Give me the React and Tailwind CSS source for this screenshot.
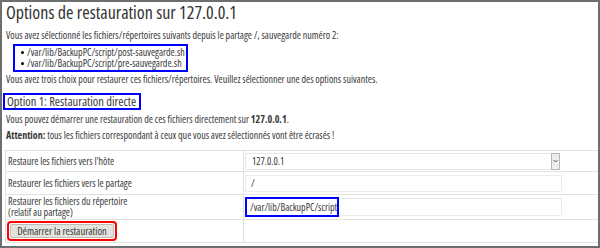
import React from "react";

export default function App() {
  const font = { fontFamily: '"Open Sans", "Noto Sans", sans-serif' };
  return (
    <div className="w-[600px] h-[248px] bg-white border-2 border-[#6e6e6e] overflow-hidden text-[#383838] font-stretch-[76%]" style={font}>
      <h1 className="text-[18px] leading-[16px] pt-[2px] pl-[4px] font-normal text-[#333] whitespace-nowrap">
        Options de restauration sur 127.0.0.1
      </h1>
      <p className="text-[10px] leading-[10px] mt-[10px] pl-[4px] whitespace-nowrap">
        Vous avez sélectionné les fichiers/répertoires suivants depuis le partage /, sauvegarde numéro 2:
      </p>
      <div className="ml-[11px] mt-[4px] w-fit h-[28px] border-2 border-[#0000ff] flex flex-col justify-center pl-[6px] pr-[1px]">
        <div className="flex items-center text-[10px] leading-[11px] whitespace-nowrap">
          <span className="w-[3px] h-[3px] rounded-full bg-black mr-[3px]"></span>
          /var/lib/BackupPC/script/post-sauvegarde.sh
        </div>
        <div className="flex items-center text-[10px] leading-[11px] whitespace-nowrap">
          <span className="w-[3px] h-[3px] rounded-full bg-black mr-[3px]"></span>
          /var/lib/BackupPC/script/pre-sauvegarde.sh
        </div>
      </div>
      <p className="text-[10px] leading-[10px] mt-[2px] pl-[4px] whitespace-nowrap">
        Vous avez trois choix pour restaurer ces fichiers/répertoires. Veuillez sélectionner une des options suivantes.
      </p>
      <div className="mt-[9px] ml-[1px] w-fit h-[17px] border-2 border-[#0000ff] flex items-center pl-[2px] pr-[3px] text-[12.5px] leading-[13px] whitespace-nowrap">
        Option 1: Restauration directe
      </div>
      <p className="text-[10px] leading-[10px] mt-[4px] pl-[4px] whitespace-nowrap">
        Vous pouvez démarrer une restauration de ces fichiers directement sur <b>127.0.0.1</b>.
      </p>
      <p className="text-[10px] leading-[10px] mt-[6px] pl-[4px] whitespace-nowrap">
        <b>Attention:</b> tous les fichiers correspondant à ceux que vous avez sélectionnés vont être écrasés !
      </p>
      <div className="mt-[10px] ml-[3px] border-t border-l border-[#e2e2dc] text-[10px] leading-[10px] grid grid-cols-[238px_1fr]">
        <div className="h-[21px] flex items-center pl-[2px] border-r border-b border-[#e2e2dc] whitespace-nowrap">Restaure les fichiers vers l'hôte</div>
        <div className="h-[21px] flex items-center pl-[1px] border-b border-[#e2e2dc]">
          <div className="w-[315px] h-[17px] border border-[#e6e6e6] flex items-center justify-between pl-[6px]">
            <span>127.0.0.1</span>
            <span className="w-[9px] h-[17px] -mr-[1px] border border-[#b5b5b5] bg-[#ededed] rounded-[1px] flex items-center justify-center">
              <svg width="5" height="4" viewBox="0 0 5 4"><path d="M0.5 1 L2.5 3 L4.5 1" stroke="#555" strokeWidth="1" fill="none" /></svg>
            </span>
          </div>
        </div>
        <div className="h-[23px] flex items-center pl-[2px] border-r border-b border-[#e2e2dc] whitespace-nowrap">Restaurer les fichiers vers le partage</div>
        <div className="h-[23px] flex items-center pl-[1px] border-b border-[#e2e2dc]">
          <div className="w-[317px] h-[17px] border border-[#ececec] flex items-center pl-[5px]">/</div>
        </div>
        <div className="h-[25px] flex flex-col justify-center pl-[2px] border-r border-b border-[#e2e2dc] whitespace-nowrap leading-[11px]">
          <span>Restaurer les fichiers du répertoire</span>
          <span>(relatif au partage)</span>
        </div>
        <div className="h-[25px] flex items-center pl-[1px] border-b border-[#e2e2dc]">
          <div className="w-[317px] h-[18px] border border-[#ececec] flex items-center relative">
            <div className="absolute -left-[1px] -top-[2px] w-[94px] h-[20px] border-2 border-[#0000ff]"></div>
            <span className="pl-[4px]">/var/lib/BackupPC/script</span>
          </div>
        </div>
        <div className="h-[23px] flex items-center pl-[1px] border-r border-[#e2e2dc] border-b">
          <div className="w-[110px] h-[20px] border-2 border-[#ff0000] rounded-[4px] flex items-center justify-center p-[1px]">
            <div className="w-full h-full bg-[#e4e4de] border border-[#bdbdb6] rounded-[2px] flex items-center justify-center text-[10.5px] whitespace-nowrap">
              Démarrer la restauration
            </div>
          </div>
        </div>
        <div className="h-[23px] border-b border-[#e2e2dc]"></div>
      </div>
    </div>
  );
}
